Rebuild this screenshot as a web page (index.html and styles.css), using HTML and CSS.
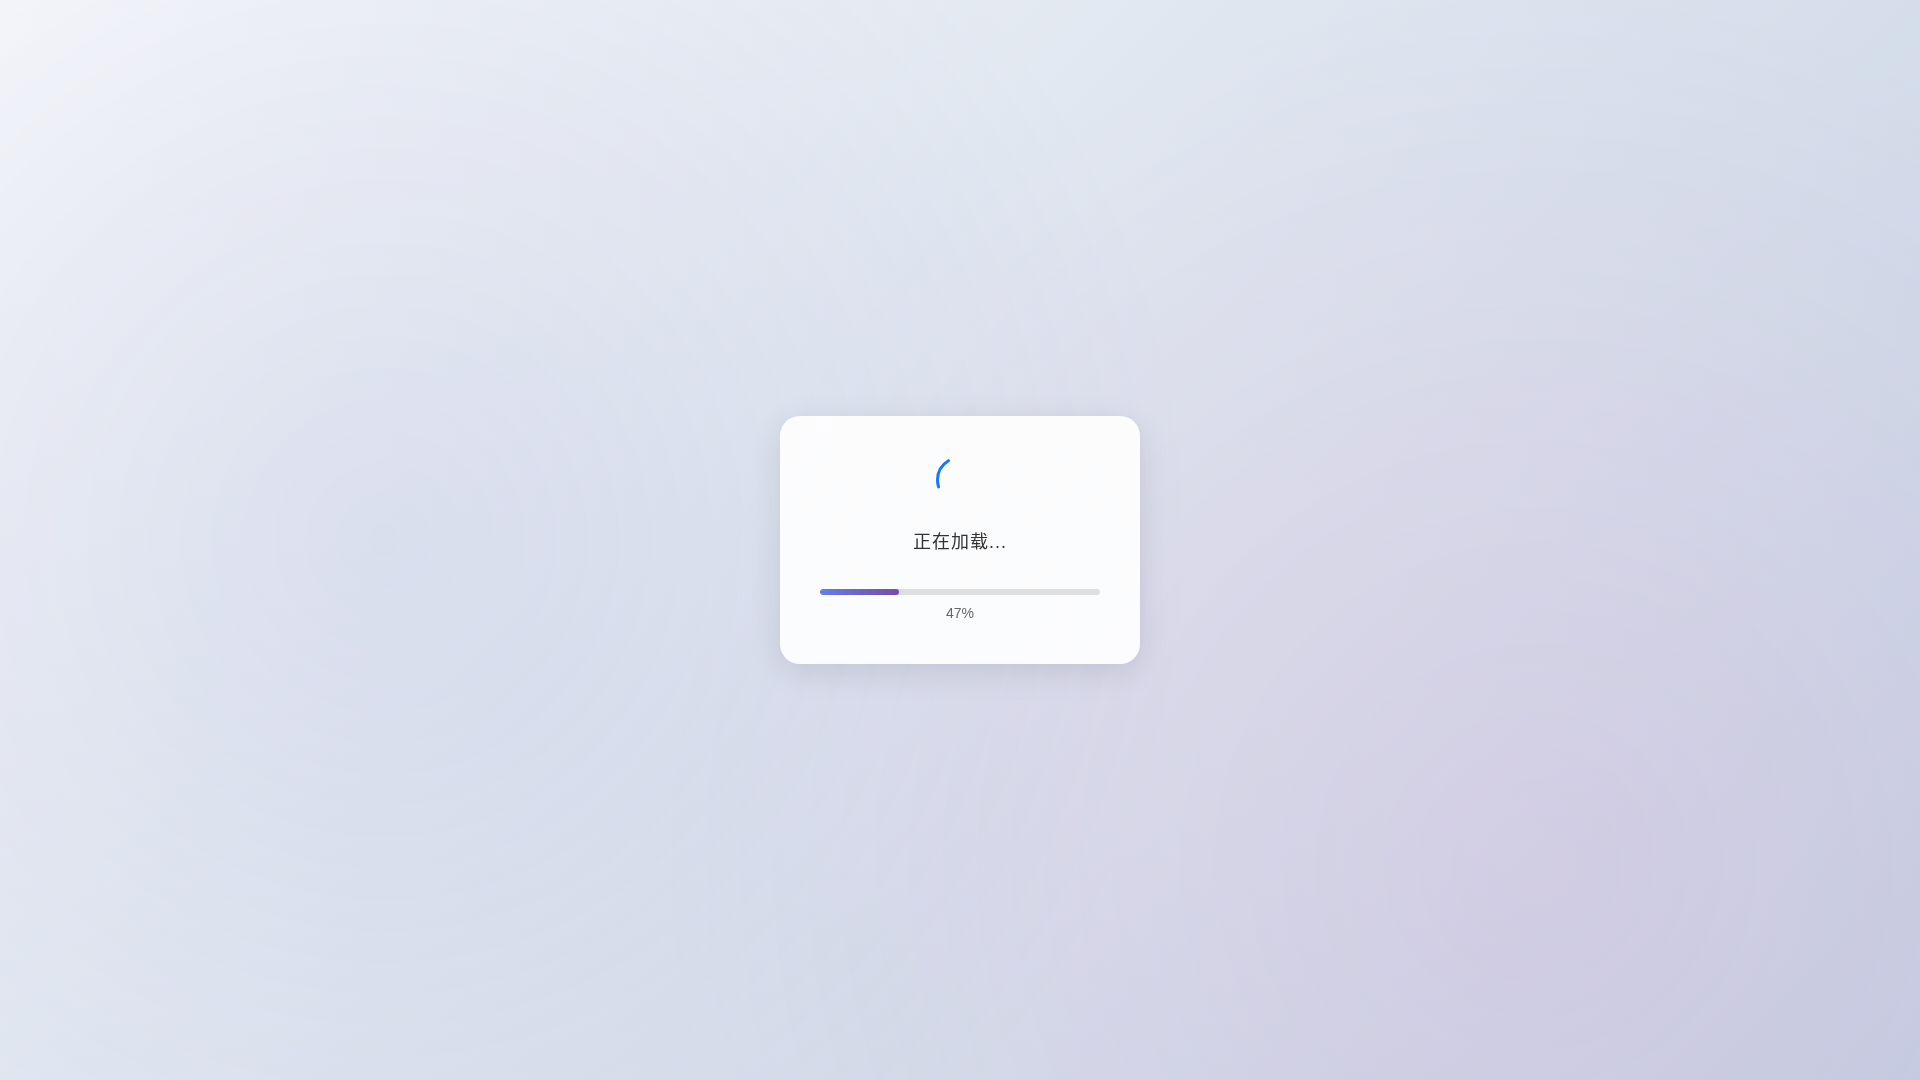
FILE: index.html
```html
<!DOCTYPE html>
<html lang="zh-CN">
<head>
    <meta charset="UTF-8">
    <meta name="viewport" content="width=device-width, initial-scale=1.0">
    <title>正在加载...</title>
    <link rel="stylesheet" href="styles.css">
</head>
<body>
    <div class="loading-screen">
        <div class="loading-card">
            <svg class="spinner" viewBox="0 0 32 32" aria-hidden="true">
                <circle class="spinner-path" cx="16" cy="16" r="15" pathLength="360" />
            </svg>
            <p class="loading-text" id="loading-text">正在加载...</p>
            <div class="progress" role="progressbar" aria-labelledby="loading-text" aria-valuemin="0" aria-valuemax="100" aria-valuenow="47">
                <div class="progress-fill"></div>
            </div>
            <div class="progress-text">47%</div>
        </div>
    </div>
</body>
</html>
```
FILE: styles.css
```css
* {
    box-sizing: border-box;
    margin: 0;
    padding: 0;
}

body {
    font-family: "Liberation Sans", "Noto Sans CJK SC", sans-serif;
}

.loading-screen {
    position: relative;
    display: flex;
    align-items: center;
    justify-content: center;
    min-height: 100vh;
    background: linear-gradient(135deg, #f5f7fa 0%, #c3cfe2 100%);
}

/* soft colour glow over the base gradient */
.loading-screen::before {
    content: "";
    position: absolute;
    inset: 0;
    background:
        radial-gradient(circle at 20% 50%, rgba(120, 119, 198, 0.1) 0%, transparent 50%),
        radial-gradient(circle at 80% 80%, rgba(255, 119, 198, 0.1) 0%, transparent 50%);
    will-change: transform;
}

.loading-card {
    position: relative;
    display: flex;
    flex-direction: column;
    align-items: center;
    width: 360px;
    max-width: 90%;
    padding: 40px;
    border-radius: 20px;
    background: rgba(255, 255, 255, 0.9);
    box-shadow: 0 8px 32px rgba(0, 0, 0, 0.1);
    will-change: transform;
}

.spinner {
    width: 48px;
    height: 48px;
    margin-bottom: 25px;
}

.spinner-path {
    fill: none;
    stroke: #1677ff;
    stroke-width: 2;
    stroke-linecap: round;
    stroke-dasharray: 77 283;
    stroke-dashoffset: -162;
}

.loading-text {
    margin-bottom: 33px;
    color: #333;
    font-size: 18px;
    line-height: 27px;
    letter-spacing: 1px;
}

.progress {
    width: 100%;
    height: 6px;
    border-radius: 3px;
    background: #e0e0e0;
    overflow: hidden;
}

.progress-fill {
    width: 79px;
    height: 100%;
    border-radius: 3px;
    background: linear-gradient(135deg, #667eea 0%, #764ba2 100%);
    box-shadow: 0 0 10px rgba(102, 126, 234, 0.3);
}

.progress-text {
    margin-top: 8px;
    color: #666;
    font-size: 14px;
    line-height: 21px;
}
```
